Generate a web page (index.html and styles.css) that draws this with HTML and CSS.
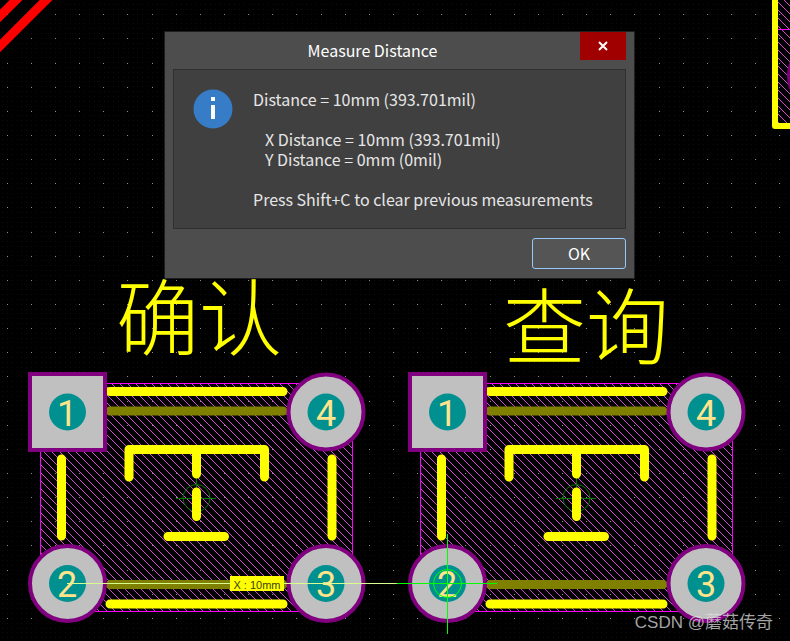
FILE: index.html
```html
<!DOCTYPE html>
<html lang="zh-CN">
<head>
    <meta charset="utf-8">
    <title>Measure Distance</title>
    <link rel="stylesheet" href="styles.css">
</head>
<body>
    <!-- PCB 画布 -->
    <svg class="board" aria-label="PCB">
        <defs>
            <pattern id="minor" width="29" height="29" x="2" y="4" patternUnits="userSpaceOnUse">
                <path class="minor-dot" d="M0 .5h29M0 5.5h29M0 10.5h29M0 15.5h29M0 19.5h29M0 24.5h29" stroke-dasharray="1 4 1 4 1 4 1 3 1 4 1 4"/>
            </pattern>
            <pattern id="major" width="169" height="169" x="7" y="14" patternUnits="userSpaceOnUse">
                <path class="major-dot" d="M0 .5h169M0 24.5h169M0 49.5h169M0 73.5h169M0 97.5h169M0 121.5h169M0 145.5h169" stroke-dasharray="1 23 1 23 1 23 1 23 1 23 1 24 1 23"/>
            </pattern>
            <pattern id="hatch" width="8" height="8" patternUnits="userSpaceOnUse">
                <path class="hatch-line" d="M0 0h1v1h-1zM1 1h1v1h-1zM2 2h1v1h-1zM3 3h1v1h-1zM4 4h1v1h-1zM5 5h1v1h-1zM6 6h1v1h-1zM7 7h1v1h-1z"/>
            </pattern>
            <!-- 按键封装 -->
            <g id="key">
                <rect class="area" x="40.5" y="383.5" width="312" height="228"/>
                <path class="origin" d="M176 498.5h40M196.5 478v40"/>
                <circle class="origin" cx="196.5" cy="498" r="13.5"/>
                <path class="track keepout" d="M110 411h173M110 584.5h173"/>
                <path class="track" d="M110 391.5h173M110 604h173M61.5 459v77M332 459v77"/>
                <path class="track" d="M129 477v-27.5h135.5v27.5M196.5 449.5v24.5M196.5 492v24.5M168 536.5h56.5"/>
                <rect class="pad" x="30" y="374" width="75" height="76"/>
                <circle class="pad" cx="326" cy="412" r="37.5"/>
                <circle class="pad" cx="67.5" cy="583.5" r="37.5"/>
                <circle class="pad" cx="326" cy="583.5" r="37.5"/>
                <g class="hole">
                    <circle cx="67.5" cy="412" r="18.5"/>
                    <circle cx="326" cy="412" r="18.5"/>
                    <circle cx="67.5" cy="583.5" r="18.5"/>
                    <circle cx="326" cy="583.5" r="18.5"/>
                </g>
            </g>
        </defs>

        <rect width="100%" height="100%" fill="url(#minor)"/>
        <rect width="100%" height="100%" fill="url(#major)"/>

        <path class="wire" d="M-10 26L26 -10M-10 56L56 -10"/>

        <rect class="area" x="777.5" y="-10" width="60" height="134"/>
        <path class="area-edge" d="M778 29.5h60"/>
        <circle class="via" cx="827" cy="76" r="40"/>
        <path class="outline" d="M775 -10v136h60"/>

        <g class="silk">
            <text x="116" y="349">确认</text>
            <text x="503" y="358">查询</text>
        </g>

        <use href="#key"/>
        <use href="#key" x="380"/>

        <g class="pin">
            <text x="67" y="426">1</text>
            <text x="326" y="426">4</text>
            <text x="67" y="597">2</text>
            <text x="326" y="597">3</text>
            <text x="447" y="426">1</text>
            <text x="706" y="426">4</text>
            <text x="447" y="597">2</text>
            <text x="706" y="597">3</text>
        </g>

        <!-- 测量线和光标 -->
        <path class="measure" d="M67 583.5h330"/>
        <path class="cursor" d="M397 583.5h100M447.5 534v100"/>
        <circle class="cursor" cx="447.5" cy="583.5" r="14"/>
        <rect class="tag" x="230" y="576" width="54" height="15"/>
        <text class="tag-text" x="257" y="589">X : 10mm</text>
    </svg>

    <!-- 测量结果弹窗 -->
    <section class="dialog" role="dialog" aria-labelledby="title">
        <header class="dialog-head">
            <h1 id="title">Measure Distance</h1>
            <button type="button" class="close" aria-label="Close">
                <svg width="10" height="10" viewBox="0 0 10 10"><path d="M1 1l8 8M9 1l-8 8"/></svg>
            </button>
        </header>
        <div class="dialog-body">
            <svg class="info" width="40" height="40" viewBox="0 0 40 40">
                <circle cx="20" cy="20" r="19.5"/>
                <path d="M18 8h4v4h-4zM18 16h4v14h-4z"/>
            </svg>
            <div class="message">
                <p>Distance = 10mm (393.701mil)</p>
                <p class="detail">X Distance = 10mm (393.701mil)<br>Y Distance = 0mm (0mil)</p>
                <p>Press Shift+C to clear previous measurements</p>
            </div>
        </div>
        <footer class="dialog-foot">
            <button type="button" class="ok">OK</button>
        </footer>
    </section>

    <div class="watermark">CSDN @蘑菇传奇</div>
</body>
</html>
```
FILE: styles.css
```css
* {
    margin: 0;
    padding: 0;
    box-sizing: border-box;
}
body {
    position: relative;
    min-height: 100vh;
    overflow: hidden;
    background: #000;
    font-family: "Noto Sans CJK SC", "Noto Sans", sans-serif;
}
/* 画布 */
.board {
    display: block;
    width: 100%;
    height: 100vh;
}
.minor-dot,
.major-dot {
    fill: none;
    stroke: #0e0e0e;
}
.major-dot {
    stroke: #8c8c8c;
}
.hatch-line {
    fill: #d848d8;
    shape-rendering: crispEdges;
}
.area {
    fill: url(#hatch);
    stroke: #f0f;
}
.area-edge {
    stroke: #f0f;
}
.via {
    fill: #800080;
}
.wire {
    stroke: #f00;
    stroke-width: 9;
}
.outline {
    fill: none;
    stroke: #ff0;
    stroke-width: 6;
    stroke-linejoin: round;
}
.track {
    fill: none;
    stroke: #ff0;
    stroke-width: 9;
    stroke-linecap: round;
    stroke-linejoin: round;
}
.keepout {
    stroke: #808000;
}
.origin {
    fill: none;
    stroke: #007800;
}
.pad {
    fill: #c0c0c0;
    stroke: #800080;
    stroke-width: 4;
}
.hole {
    fill: #009090;
}
.silk {
    fill: #ff0;
    font-family: "Liberation Sans", "Noto Sans CJK SC", sans-serif;
    font-size: 83px;
    font-weight: 300;
}
.pin {
    fill: #ffe48c;
    font-family: Roboto, sans-serif;
    font-size: 36px;
    text-anchor: middle;
}
.measure {
    stroke: #d8ff90;
}
.cursor {
    fill: none;
    stroke: #0f0;
}
.tag {
    fill: #ff0;
}
.tag-text {
    fill: #404000;
    font-family: "Liberation Sans", sans-serif;
    font-size: 11px;
    text-anchor: middle;
}
/* 弹窗 */
.dialog {
    position: absolute;
    top: 31px;
    left: 164px;
    width: 471px;
    padding: 0 8px 9px;
    background: #4d4d4d;
    border: 1px solid #1e1e1e;
}
.dialog-head {
    display: flex;
    align-items: flex-start;
    height: 37px;
}
.dialog-head h1 {
    flex: 1;
    margin-left: -8px;
    color: #fff;
    font-size: 16px;
    font-weight: normal;
    line-height: 36px;
    text-align: center;
}
.close {
    width: 46px;
    height: 28px;
    background: #a00000;
    border: 0;
    cursor: pointer;
}
.close path {
    stroke: #fff;
    stroke-width: 2;
}
.dialog-body {
    display: flex;
    gap: 20px;
    padding: 19px;
    background: #404040;
    border: 1px solid #303030;
}
.info circle {
    fill: #367cc6;
}
.info path {
    fill: #fff;
}
.message {
    color: #e6e6e6;
    font-size: 16px;
    line-height: 20px;
}
.message .detail {
    padding: 20px 0 20px 12px;
}
.dialog-foot {
    display: flex;
    justify-content: flex-end;
    padding-top: 9px;
}
.ok {
    width: 94px;
    height: 31px;
    padding-bottom: 2px;
    color: #fff;
    font-family: inherit;
    font-size: 16px;
    line-height: 20px;
    background: #555;
    border: 1px solid #96c8fa;
    border-radius: 3px;
    cursor: pointer;
}
.watermark {
    position: absolute;
    right: 17px;
    bottom: 6px;
    color: rgba(220, 220, 220, 0.75);
    font-family: "Liberation Sans", "Noto Sans CJK SC", sans-serif;
    font-size: 17px;
    line-height: 24px;
}
```
